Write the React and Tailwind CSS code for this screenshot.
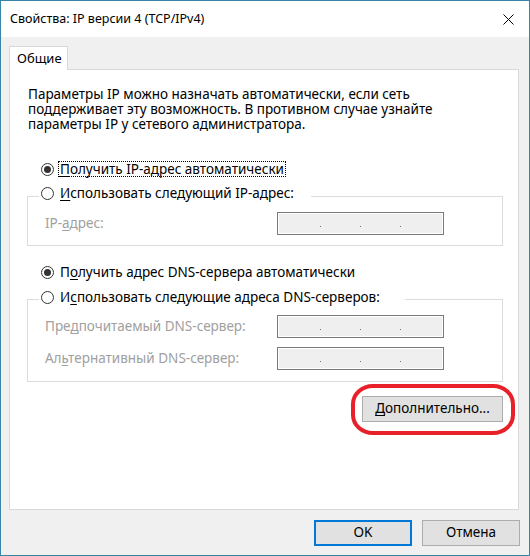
import React from 'react';

const Radio = ({ checked }) => (
  <span className="flex h-[13px] w-[13px] shrink-0 items-center justify-center rounded-full border border-[#333333] bg-white">
    {checked && <span className="h-[7px] w-[7px] rounded-full bg-[#333333]" />}
  </span>
);

const IpField = () => (
  <div className="h-[23px] w-[167px] border border-[#7a7a7a] bg-[#efefef] shadow-[inset_0_0_0_1px_#ffffff]">
    <div className="flex h-full items-end gap-[39px] pb-[7px] pl-[42px]">
      <span className="h-px w-px bg-[#6d6d8a]" />
      <span className="h-px w-px bg-[#6d6d8a]" />
      <span className="h-px w-px bg-[#6d6d8a]" />
    </div>
  </div>
);

const Key = ({ children }) => (
  <u className="underline decoration-1 underline-offset-2">{children}</u>
);

const Button = ({ children, primary, className = '' }) => (
  <button
    className={
      'flex h-[26px] items-center justify-center bg-[#e1e1e1] leading-none ' +
      (primary ? 'border-2 border-[#0078d7] ' : 'border border-[#adadad] ') +
      className
    }
  >
    {children}
  </button>
);

export default function App() {
  return (
    <div className="flex h-[556px] w-[530px] flex-col border border-[#3883a8] bg-[#f0f0f0] font-['Noto_Sans',sans-serif] text-[13.5px] text-black">
      {/* title bar */}
      <div className="flex h-[36px] shrink-0 items-center bg-white pl-[9px] pr-[15px]">
        <span className="flex-1 text-[12.5px]">Свойства: IP версии 4 (TCP/IPv4)</span>
        <svg width="11" height="11" viewBox="0 0 11 11" className="shrink-0">
          <path d="M0.5 0.5 L10.5 10.5 M10.5 0.5 L0.5 10.5" stroke="#000" strokeWidth="1" />
        </svg>
      </div>

      {/* tabs */}
      <div className="flex flex-col pl-[8px] pr-[10px] pt-[9px]">
        <div className="flex">
          <div className="relative z-10 -mb-px flex h-[24px] w-[59px] items-center border border-b-0 border-[#d9d9d9] bg-white pl-[7px] text-[13px]">
            Общие
          </div>
        </div>

        <div className="relative flex h-[441px] flex-col border border-[#d9d9d9] bg-white pl-[17px] pt-[17px]">
          <p className="whitespace-nowrap pl-px leading-[15px]">
            Параметры IP можно назначать автоматически, если сеть
            <br />
            поддерживает эту возможность. В противном случае узнайте
            <br />
            параметры IP у сетевого администратора.
          </p>

          <div className="mt-[29px] flex h-[16px] items-center pl-[14px]">
            <Radio checked />
            <span className="ml-[4px] flex h-[16px] items-center border border-dotted border-black pl-px pr-px leading-[14px]">
              <Key>П</Key>олучить IP-адрес автоматически
            </span>
          </div>

          <div className="mt-[8px] flex">
            <div className="relative z-10 ml-[12px] flex h-[16px] w-[272px] items-center bg-white pl-[2px]">
              <Radio />
              <span className="ml-[6px] leading-[16px]">
                <Key>И</Key>спользовать следующий IP-адрес:
              </span>
            </div>
          </div>
          <div className="-mt-[5px] flex h-[50px] w-[476px] items-start border border-[#dcdcdc] pl-[17px] pr-[58px] pt-[15px]">
            <div className="flex h-[23px] flex-1 items-center text-[#a0a0a0]">
              IP-<Key>а</Key>дрес:
            </div>
            <IpField />
          </div>

          <div className="mt-[18px] flex h-[16px] items-center pl-[14px]">
            <Radio checked />
            <span className="ml-[6px] leading-[16px]">
              П<Key>о</Key>лучить адрес DNS-сервера автоматически
            </span>
          </div>

          <div className="mt-[9px] flex">
            <div className="relative z-10 ml-[12px] flex h-[16px] w-[366px] items-center bg-white pl-[2px]">
              <Radio />
              <span className="ml-[6px] leading-[16px]">
                И<Key>с</Key>пользовать следующие адреса DNS-серверов:
              </span>
            </div>
          </div>
          <div className="-mt-[6px] flex h-[83px] w-[476px] flex-col gap-[9px] border border-[#dcdcdc] pl-[17px] pr-[58px] pt-[15px]">
            <div className="flex items-center">
              <span className="flex-1 text-[#a0a0a0]">
                Пре<Key>д</Key>почитаемый DNS-сервер:
              </span>
              <IpField />
            </div>
            <div className="flex items-center">
              <span className="flex-1 text-[#a0a0a0]">
                Ал<Key>ь</Key>тернативный DNS-сервер:
              </span>
              <IpField />
            </div>
          </div>

          <div className="mt-[14px] flex w-[476px] justify-end">
            <Button className="w-[141px]">
              <span>
                <Key>Д</Key>ополнительно...
              </span>
            </Button>
          </div>

          {/* red annotation around the button */}
          <svg
            className="pointer-events-none absolute left-[339px] top-[312px]"
            width="168"
            height="56"
            viewBox="0 0 168 56"
          >
            <rect x="4" y="4" width="160" height="47" rx="20" ry="18" fill="none" stroke="#e8202a" strokeWidth="4" />
          </svg>
        </div>
      </div>

      {/* dialog buttons */}
      <div className="mt-[10px] flex justify-end gap-[10px] pr-[9px]">
        <Button primary className="w-[98px]">OK</Button>
        <Button className="w-[98px]">Отмена</Button>
      </div>
    </div>
  );
}
